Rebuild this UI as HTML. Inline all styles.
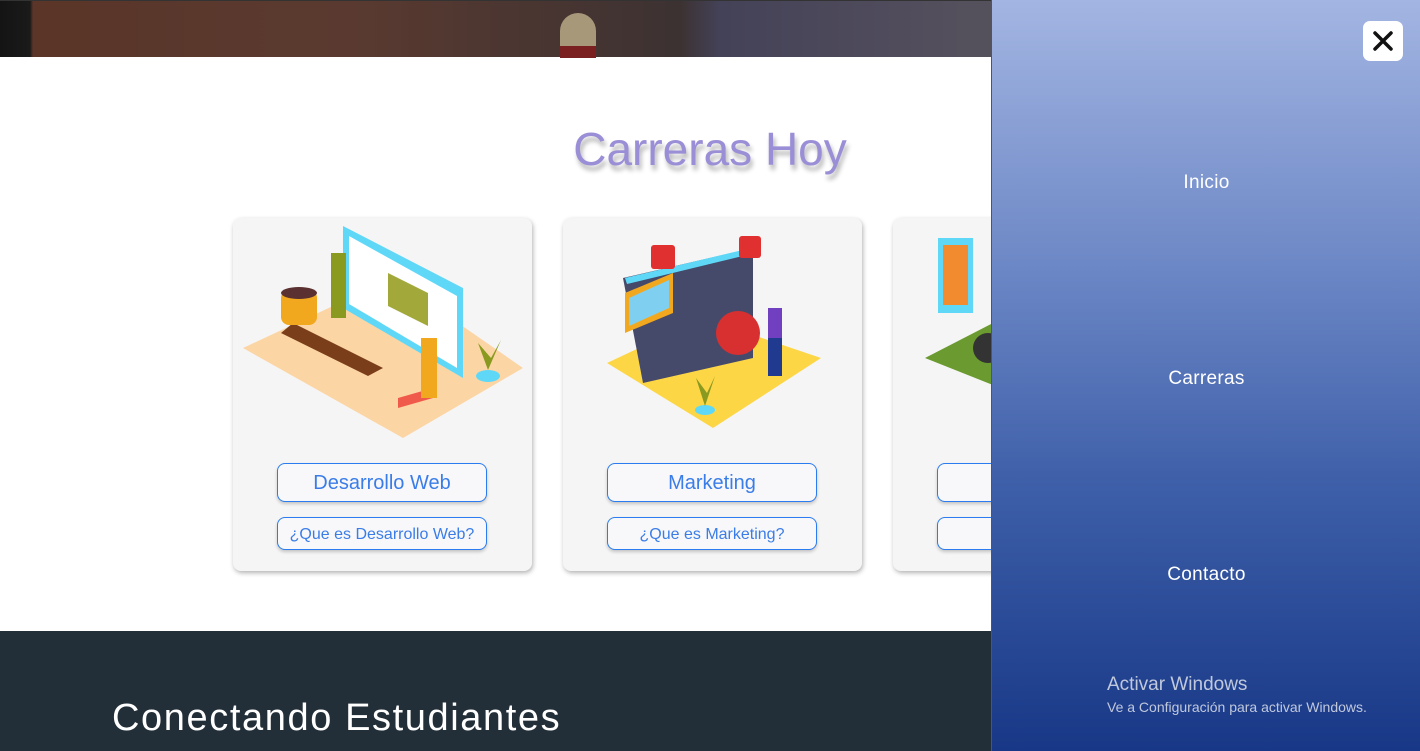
<!DOCTYPE html>
<html><head><meta charset="utf-8"><style>
*{margin:0;padding:0;box-sizing:border-box}
body{width:1420px;height:751px;overflow:hidden;position:relative;background:#fff;font-family:"Liberation Sans","DejaVu Sans",sans-serif}
.hero{position:absolute;left:0;top:0;width:1420px;height:57px;background:linear-gradient(90deg,#141414 0,#1a1a1a 30px,#5a3528 33px,#5a3a30 350px,#3c3232 680px,#444258 720px,#504c5c 900px,#56525c 1000px);border-top:1px solid #333}
.drum{position:absolute;left:560px;top:12px;width:36px;height:45px;border-radius:18px 18px 4px 4px;background:#a8987a}
.drum:after{content:"";position:absolute;left:0;right:0;bottom:0;height:12px;background:#7a2020}
h2{position:absolute;left:0;width:1420px;top:122px;text-align:center;font-weight:normal;font-size:46px;color:#9a8fd6;text-shadow:2px 5px 5px rgba(0,0,0,.3)}
.card{position:absolute;top:218px;width:299px;height:353px;background:#f5f5f5;border-radius:8px;box-shadow:1px 2px 5px rgba(0,0,0,.3)}
.b1,.b2{position:absolute;left:44px;width:210px;border:1px solid #2a7cf0;border-radius:8px;background:#f8f8fa;color:#3a7de8;text-align:center;box-shadow:0 2px 3px rgba(0,0,0,.2)}
.b1{top:245px;height:39px;font-size:20px;line-height:39px}
.b2{top:299px;height:33px;font-size:16px;line-height:33px}
.dark{position:absolute;left:0;top:631px;width:1420px;height:120px;background:#232f38}
.dark p{position:absolute;left:112px;top:66px;color:#fff;font-size:38px;letter-spacing:1.6px}
.panel{position:absolute;left:991px;top:0;width:429px;height:751px;background:linear-gradient(#a3b5e2,#6d88c6 35%,#3d5ea8 65%,#183887);border-left:1px solid #555}
.panel a{position:absolute;left:0;width:429px;text-align:center;color:#fff;font-size:19px;letter-spacing:.3px}
.x{position:absolute;left:371px;top:21px;width:40px;height:40px;background:#fff;border-radius:7px}
.win{position:absolute;left:115px;color:#c0c8dc}
</style></head><body>
<div class="hero"><div class="drum"></div></div>
<h2>Carreras Hoy</h2>
<div class="card" style="left:233px">
<svg width="299" height="230" style="position:absolute;left:0;top:0">
<polygon points="10,130 160,60 290,150 170,220" fill="#fcd5a5"/>
<polygon points="110,8 230,70 230,160 110,90" fill="#5fd8f8"/><polygon points="116,18 224,78 224,150 116,86" fill="#fff"/>
<polygon points="155,55 195,75 195,108 155,88" fill="#a2a83a"/>
<polygon points="60,105 150,150 135,158 48,115" fill="#7a3e1a"/>
<polygon points="165,180 200,170 200,180 165,190" fill="#f05a4a"/>
<rect x="48" y="72" width="36" height="35" rx="8" fill="#f2a81e"/><ellipse cx="66" cy="75" rx="18" ry="6" fill="#5a3030"/>
<rect x="98" y="35" width="15" height="65" fill="#8a9a20"/><rect x="188" y="120" width="16" height="60" fill="#f2a81e"/>
<ellipse cx="255" cy="158" rx="12" ry="6" fill="#5fd8f8"/><polygon points="255,152 245,125 258,140 268,122" fill="#8a9a20"/>
</svg>
<div class="b1">Desarrollo Web</div><div class="b2">¿Que es Desarrollo Web?</div></div>
<div class="card" style="left:563px">
<svg width="299" height="230" style="position:absolute;left:0;top:0">
<polygon points="44,145 140,100 258,140 150,210" fill="#fdd646"/>
<polygon points="60,60 190,30 190,140 80,165" fill="#454a6a"/><polygon points="62,60 188,30 188,36 64,66" fill="#5fd8f8"/>
<polygon points="62,75 110,55 110,95 62,115" fill="#f2a81e"/><polygon points="66,80 106,62 106,90 66,108" fill="#7fd0f0"/>
<circle cx="175" cy="115" r="22" fill="#d83030"/><rect x="88" y="27" width="24" height="24" rx="3" fill="#e03030"/><rect x="176" y="18" width="22" height="22" rx="3" fill="#e03030"/>
<rect x="205" y="90" width="14" height="30" fill="#7040c0"/><rect x="205" y="120" width="14" height="38" fill="#203a90"/>
<ellipse cx="142" cy="192" rx="10" ry="5" fill="#5fd8f8"/><polygon points="142,188 133,160 144,175 152,158" fill="#8a9a20"/>
</svg>
<div class="b1">Marketing</div><div class="b2">¿Que es Marketing?</div></div>
<div class="card" style="left:893px">
<svg width="299" height="230" style="position:absolute;left:0;top:0">
<polygon points="32,140 100,105 120,175" fill="#6a9a30"/><rect x="45" y="20" width="35" height="75" fill="#5fd8f8"/><rect x="50" y="27" width="25" height="60" fill="#f28a30"/>
<circle cx="95" cy="130" r="15" fill="#333"/>
</svg>
<div class="b1"></div><div class="b2">¿Que</div></div>
<div class="dark"><p>Conectando Estudiantes</p></div>
<div class="panel">
<div class="x"><svg width="40" height="40"><path d="M12 12L28 28M28 12L12 28" stroke="#111" stroke-width="3.5" stroke-linecap="round"/></svg></div>
<a style="top:172px">Inicio</a><a style="top:368px">Carreras</a><a style="top:564px">Contacto</a>
<div class="win" style="top:674px;font-size:19px">Activar Windows</div>
<div class="win" style="top:699px;font-size:14px">Ve a Configuración para activar Windows.</div>
</div>
</body></html>
